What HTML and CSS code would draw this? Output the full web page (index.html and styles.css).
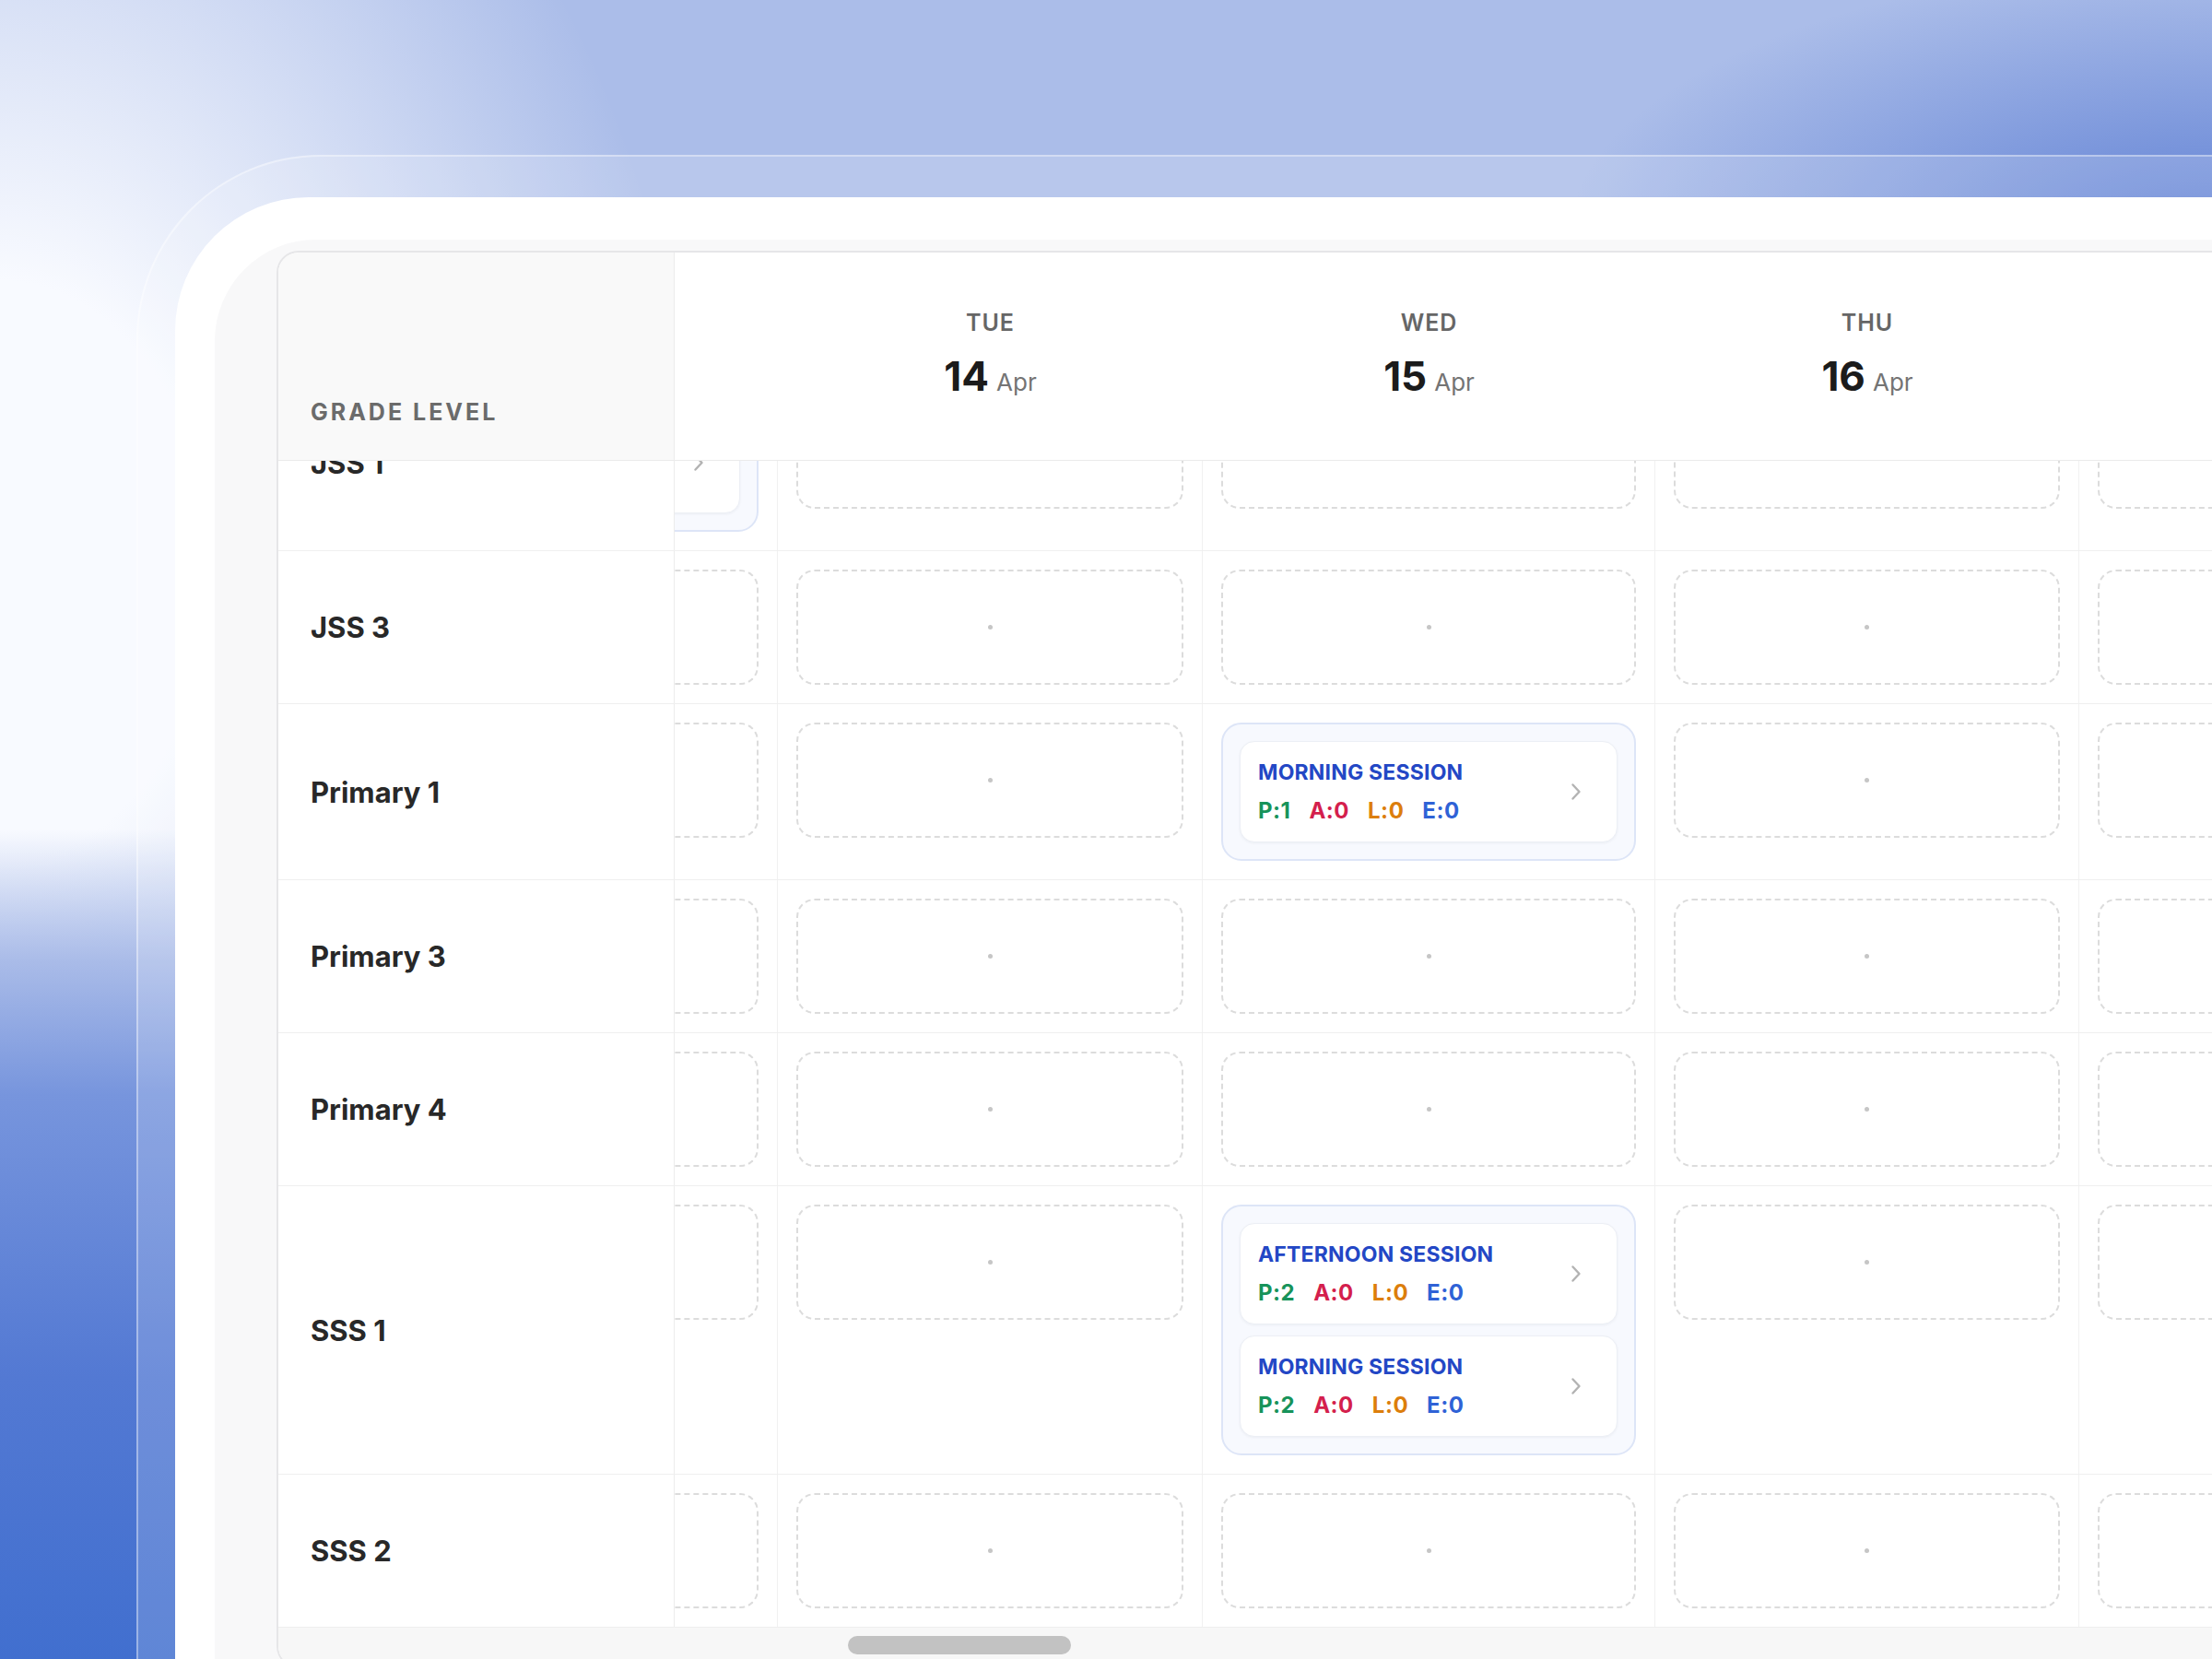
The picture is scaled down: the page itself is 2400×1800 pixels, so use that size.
FILE: index.html
```html
<!DOCTYPE html>
<html>
<head>
    <meta charset="utf-8">
    <title>Attendance by grade level</title>
    <link rel="stylesheet" href="styles.css">
</head>
<body>
    <div class="stage">
        <div class="glass">
            <div class="bezel">
                <div class="screen">
                    <div class="panel">
                        <div class="grid-head">
                            <div class="head-grade">GRADE LEVEL</div>
                            <div class="head-day col-mon"></div>
                            <div class="head-day col-tue">
                                <div class="day-name">TUE</div>
                                <div class="day-date"><span class="date-num">14</span><span class="date-mon">Apr</span></div>
                            </div>
                            <div class="head-day col-wed">
                                <div class="day-name">WED</div>
                                <div class="day-date"><span class="date-num">15</span><span class="date-mon">Apr</span></div>
                            </div>
                            <div class="head-day col-thu">
                                <div class="day-name">THU</div>
                                <div class="day-date"><span class="date-num">16</span><span class="date-mon">Apr</span></div>
                            </div>
                            <div class="head-day col-fri"></div>
                        </div>

                        <div class="grid-body">
                            <div class="rows">
                                <!-- JSS 1 (scrolled under the header) -->
                                <div class="row">
                                    <div class="grade">JSS 1</div>
                                    <div class="day col-mon">
                                        <div class="sessions">
                                            <div class="session">
                                                <div>
                                                    <div class="session-title">MORNING SESSION</div>
                                                    <div class="stats"><span class="p">P:1</span><span class="a">A:0</span><span class="l">L:0</span><span class="e">E:0</span></div>
                                                </div>
                                                <svg class="chevron" width="12" height="20" viewBox="0 0 12 20"><path d="M2.5 2.5l7 7.5-7 7.5" /></svg>
                                            </div>
                                        </div>
                                    </div>
                                    <div class="day col-tue"><div class="slot"><span class="dot"></span></div></div>
                                    <div class="day col-wed"><div class="slot"><span class="dot"></span></div></div>
                                    <div class="day col-thu"><div class="slot"><span class="dot"></span></div></div>
                                    <div class="day col-fri"><div class="slot"><span class="dot"></span></div></div>
                                </div>

                                <div class="row">
                                    <div class="grade">JSS 3</div>
                                    <div class="day col-mon"><div class="slot"><span class="dot"></span></div></div>
                                    <div class="day col-tue"><div class="slot"><span class="dot"></span></div></div>
                                    <div class="day col-wed"><div class="slot"><span class="dot"></span></div></div>
                                    <div class="day col-thu"><div class="slot"><span class="dot"></span></div></div>
                                    <div class="day col-fri"><div class="slot"><span class="dot"></span></div></div>
                                </div>

                                <div class="row">
                                    <div class="grade">Primary 1</div>
                                    <div class="day col-mon"><div class="slot"><span class="dot"></span></div></div>
                                    <div class="day col-tue"><div class="slot"><span class="dot"></span></div></div>
                                    <div class="day col-wed">
                                        <div class="sessions">
                                            <div class="session">
                                                <div>
                                                    <div class="session-title">MORNING SESSION</div>
                                                    <div class="stats"><span class="p">P:1</span><span class="a">A:0</span><span class="l">L:0</span><span class="e">E:0</span></div>
                                                </div>
                                                <svg class="chevron" width="12" height="20" viewBox="0 0 12 20"><path d="M2.5 2.5l7 7.5-7 7.5" /></svg>
                                            </div>
                                        </div>
                                    </div>
                                    <div class="day col-thu"><div class="slot"><span class="dot"></span></div></div>
                                    <div class="day col-fri"><div class="slot"><span class="dot"></span></div></div>
                                </div>

                                <div class="row">
                                    <div class="grade">Primary 3</div>
                                    <div class="day col-mon"><div class="slot"><span class="dot"></span></div></div>
                                    <div class="day col-tue"><div class="slot"><span class="dot"></span></div></div>
                                    <div class="day col-wed"><div class="slot"><span class="dot"></span></div></div>
                                    <div class="day col-thu"><div class="slot"><span class="dot"></span></div></div>
                                    <div class="day col-fri"><div class="slot"><span class="dot"></span></div></div>
                                </div>

                                <div class="row">
                                    <div class="grade">Primary 4</div>
                                    <div class="day col-mon"><div class="slot"><span class="dot"></span></div></div>
                                    <div class="day col-tue"><div class="slot"><span class="dot"></span></div></div>
                                    <div class="day col-wed"><div class="slot"><span class="dot"></span></div></div>
                                    <div class="day col-thu"><div class="slot"><span class="dot"></span></div></div>
                                    <div class="day col-fri"><div class="slot"><span class="dot"></span></div></div>
                                </div>

                                <div class="row">
                                    <div class="grade">SSS 1</div>
                                    <div class="day col-mon"><div class="slot"><span class="dot"></span></div></div>
                                    <div class="day col-tue"><div class="slot"><span class="dot"></span></div></div>
                                    <div class="day col-wed">
                                        <div class="sessions">
                                            <div class="session">
                                                <div>
                                                    <div class="session-title">AFTERNOON SESSION</div>
                                                    <div class="stats"><span class="p">P:2</span><span class="a">A:0</span><span class="l">L:0</span><span class="e">E:0</span></div>
                                                </div>
                                                <svg class="chevron" width="12" height="20" viewBox="0 0 12 20"><path d="M2.5 2.5l7 7.5-7 7.5" /></svg>
                                            </div>
                                            <div class="session">
                                                <div>
                                                    <div class="session-title">MORNING SESSION</div>
                                                    <div class="stats"><span class="p">P:2</span><span class="a">A:0</span><span class="l">L:0</span><span class="e">E:0</span></div>
                                                </div>
                                                <svg class="chevron" width="12" height="20" viewBox="0 0 12 20"><path d="M2.5 2.5l7 7.5-7 7.5" /></svg>
                                            </div>
                                        </div>
                                    </div>
                                    <div class="day col-thu"><div class="slot"><span class="dot"></span></div></div>
                                    <div class="day col-fri"><div class="slot"><span class="dot"></span></div></div>
                                </div>

                                <div class="row">
                                    <div class="grade">SSS 2</div>
                                    <div class="day col-mon"><div class="slot"><span class="dot"></span></div></div>
                                    <div class="day col-tue"><div class="slot"><span class="dot"></span></div></div>
                                    <div class="day col-wed"><div class="slot"><span class="dot"></span></div></div>
                                    <div class="day col-thu"><div class="slot"><span class="dot"></span></div></div>
                                    <div class="day col-fri"><div class="slot"><span class="dot"></span></div></div>
                                </div>
                            </div>
                        </div>

                        <div class="hscroll"><div class="thumb"></div></div>
                    </div>
                </div>
            </div>
        </div>
    </div>
</body>
</html>
```

FILE: styles.css
```css
html, body {
    margin: 0;
    height: 100%;
    overflow: hidden;
}

body {
    font-family: "Inter", "Liberation Sans", sans-serif;
    background-color: #abbde9;
    background-image:
        linear-gradient(180deg, rgba(169,187,232,0) 50%, #a9bbe8 58%, #7795dd 66%, #5379d3 83%, #416fcf 100%),
        radial-gradient(700px 300px at 2400px 260px, rgba(95,128,212,1), rgba(95,128,212,0)),
        radial-gradient(760px 1050px at 0 620px, #f8faff 30%, rgba(248,250,255,0) 100%);
}

/* device frame */
.stage {
    padding: 168px 0 0 148px;
}

.glass {
    background: rgba(255,255,255,0.16);
    border-top: 2px solid rgba(255,255,255,0.38);
    border-left: 2px solid rgba(255,255,255,0.38);
    border-top-left-radius: 200px;
    padding: 44px 0 0 40px;
}

.bezel {
    background: #fff;
    border-top-left-radius: 145px;
    padding: 46px 0 0 43px;
}

.screen {
    background: #f8f8f9;
    border-top-left-radius: 110px;
    padding: 12px 0 0 67px;
}

.panel {
    background: #fff;
    border: 2px solid #e6e6e8;
    border-right: 0;
    border-radius: 24px 0 0 24px;
    overflow: hidden;
}

/* column widths shared by head and rows */
.col-mon { width: 112px; }
.col-tue { width: 461px; }
.col-wed { width: 491px; }
.col-thu { width: 460px; }
.col-fri { width: 461px; }

/* header */
.grid-head {
    display: flex;
    height: 225px;
    border-bottom: 1px solid #ebebeb;
}

.head-grade {
    flex: none;
    width: 430px;
    box-sizing: border-box;
    background: #f9f9f9;
    border-right: 1px solid #ececec;
    display: flex;
    align-items: flex-end;
    padding: 0 0 37px 35px;
    font-size: 25px;
    line-height: 29px;
    font-weight: 700;
    letter-spacing: 3px;
    color: #6b6b6b;
}

.head-day {
    flex: none;
    box-sizing: border-box;
    display: flex;
    flex-direction: column;
    align-items: center;
    justify-content: center;
    padding-bottom: 8px;
}

.day-name {
    font-size: 25px;
    line-height: 29px;
    font-weight: 600;
    letter-spacing: 1px;
    color: #666;
}

.day-date {
    display: flex;
    align-items: baseline;
    gap: 8px;
    margin-top: 21px;
}

.date-num {
    font-size: 44px;
    line-height: 1;
    font-weight: 700;
    color: #1b1b1b;
}

.date-mon {
    font-size: 26px;
    color: #747474;
}

/* body */
.grid-body {
    overflow: hidden;
}

.rows {
    margin-top: -93px;
}

.row {
    display: flex;
    border-bottom: 1px solid #efefef;
}

.grade {
    flex: none;
    width: 430px;
    box-sizing: border-box;
    border-right: 1px solid #ececec;
    padding-left: 35px;
    display: flex;
    align-items: center;
    font-size: 31px;
    font-weight: 700;
    color: #282828;
}

.day {
    flex: none;
    box-sizing: border-box;
    padding: 20px;
    border-right: 1px solid #f1f1f1;
    display: flex;
    flex-direction: column;
}

.day.col-mon {
    padding-left: 0;
    align-items: flex-end;
    overflow: hidden;
}

.col-mon .slot,
.col-mon .sessions {
    flex: none;
    width: 420px;
    box-sizing: border-box;
}

.slot {
    height: 125px;
    box-sizing: border-box;
    border: 2px dashed #dcdcdc;
    border-radius: 20px;
    display: flex;
    align-items: center;
    justify-content: center;
}

.dot {
    width: 5px;
    height: 5px;
    border-radius: 50%;
    background: #c6c6c6;
}

.sessions {
    border: 2px solid #dde5f7;
    background: #f7f9fe;
    border-radius: 22px;
    padding: 18px;
    display: flex;
    flex-direction: column;
    gap: 12px;
}

.session {
    height: 110px;
    box-sizing: border-box;
    background: #fff;
    border: 1px solid #eceff5;
    border-radius: 16px;
    padding: 0 38px 0 19px;
    display: flex;
    align-items: center;
    justify-content: space-between;
    box-shadow: 0 1px 3px rgba(20,30,60,0.05);
}

.session-title {
    font-size: 23px;
    line-height: 28px;
    font-weight: 700;
    letter-spacing: 0.2px;
    color: #2347c5;
}

.stats {
    display: flex;
    gap: 20px;
    margin-top: 14px;
    font-size: 24px;
    line-height: 28px;
    font-weight: 700;
    letter-spacing: 0.5px;
}

.p { color: #17935a; }
.a { color: #d41f4d; }
.l { color: #dc7e0c; }
.e { color: #2f62d6; }

.chevron path {
    fill: none;
    stroke: #b3b3b3;
    stroke-width: 2.4;
    stroke-linecap: round;
    stroke-linejoin: round;
}

/* horizontal scrollbar */
.hscroll {
    height: 42px;
    box-sizing: border-box;
    padding: 9px 0 0 618px;
    background: #f7f7f7;
}

.thumb {
    width: 242px;
    height: 20px;
    border-radius: 10px;
    background: #c2c2c2;
}
```
